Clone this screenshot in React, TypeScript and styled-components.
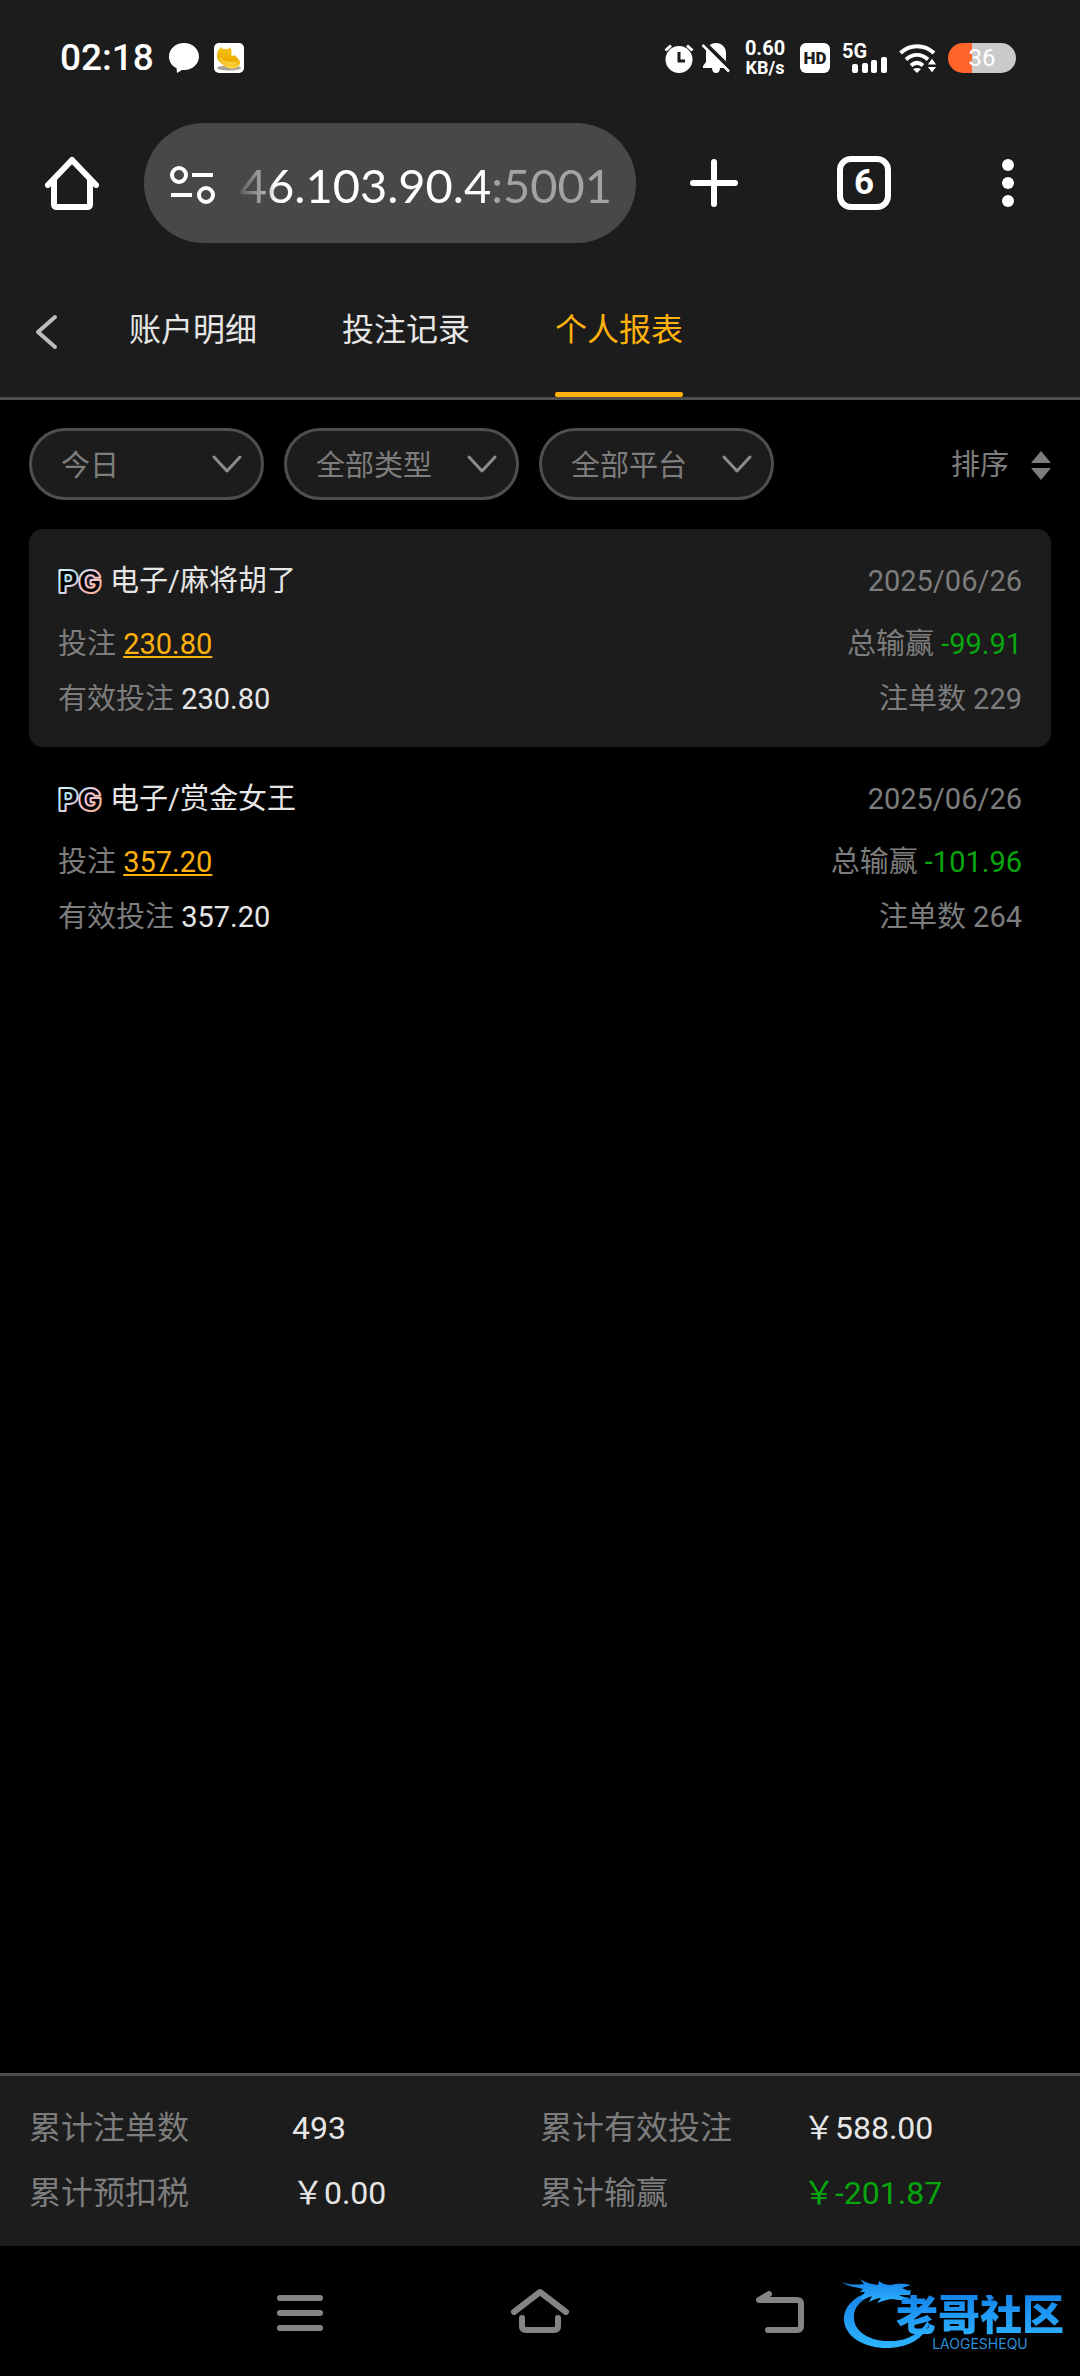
import React from "react";
import styled, { createGlobalStyle, css } from "styled-components";

const GlobalStyle = createGlobalStyle`
  *, *::before, *::after { box-sizing: border-box; }
  body {
    margin: 0;
    background: #000;
    font-family: Roboto, "Noto Sans CJK SC", sans-serif;
    font-size: 29px;
    line-height: 44px;
    color: #e6e6e6;
  }
  button, select {
    margin: 0;
    padding: 0;
    border: 0;
    background: none;
    font: inherit;
    color: inherit;
    cursor: pointer;
  }
  svg { display: block; flex: none; overflow: visible; }
`;

const Page = styled.div`
  min-height: 100vh;
  display: flex;
  flex-direction: column;
`;

const StatusBar = styled.div`
  display: flex;
  justify-content: space-between;
  align-items: center;
  height: 116px;
  padding: 0 64px 0 60px;
  background: #1c1c1c;
  color: #fff;
`;

const StatusGroup = styled.div<{ $gap: number }>`
  display: flex;
  align-items: center;
  gap: ${(p) => p.$gap}px;
`;

const Clock = styled.time`
  font-size: 37px;
  font-weight: 500;
  line-height: 44px;
`;

const NetRate = styled.div`
  width: 46px;
  font-size: 20px;
  font-weight: 700;
  line-height: 20px;
  text-align: center;
`;

const RateUnit = styled.div`
  font-size: 18px;
`;

const Battery = styled.div`
  display: flex;
  align-items: center;
  justify-content: center;
  width: 68px;
  height: 30px;
  border-radius: 15px;
  background: linear-gradient(90deg, #ff6428 36%, #cacaca 36%);
  font-size: 24px;
  line-height: 30px;
`;

const BrowserBar = styled.header`
  display: flex;
  align-items: center;
  padding: 7px 0 24px;
  background: #1c1c1c;
`;

const BarButton = styled.button<{ $width?: number }>`
  display: flex;
  align-items: center;
  justify-content: center;
  width: ${(p) => p.$width ?? 144}px;
  height: 120px;
`;

const AddressPill = styled.button`
  flex: 1;
  min-width: 0;
  display: flex;
  align-items: center;
  gap: 24px;
  height: 120px;
  padding: 4px 24px 0 26px;
  border-radius: 60px;
  background: #484848;
`;

const Address = styled.span`
  flex: 1;
  min-width: 0;
  display: flex;
  justify-content: flex-end;
  overflow: hidden;
  font-family: Lato, sans-serif;
  font-size: 47px;
  line-height: 60px;
  white-space: nowrap;
  color: #fff;
  mask-image: linear-gradient(90deg, rgba(0, 0, 0, 0.1), rgba(0, 0, 0, 0.6) 28px, #000 36px);
`;

const Port = styled.span`
  color: #a3a3a3;
`;

const TabCount = styled.span`
  display: flex;
  align-items: center;
  justify-content: center;
  width: 54px;
  height: 54px;
  border: 6px solid #fff;
  border-radius: 14px;
  font-size: 35px;
  font-weight: 700;
  color: #fff;
`;

const TabBar = styled.nav`
  display: flex;
  align-items: stretch;
  height: 133px;
  border-bottom: 3px solid #4f4f4f;
  background: #1c1c1c;
`;

const BackButton = styled.button`
  display: flex;
  align-items: center;
  width: 129px;
  padding-left: 34px;
`;

const Tabs = styled.div`
  display: flex;
  gap: 85px;
`;

const Tab = styled.button<{ $active?: boolean }>`
  position: relative;
  padding-bottom: 5px;
  font-size: 32px;
  white-space: nowrap;
  color: #e6e6e6;
  ${(p) =>
    p.$active &&
    css`
      color: #ffb10d;
      &::after {
        content: "";
        position: absolute;
        left: 0;
        right: 0;
        bottom: 0;
        height: 5px;
        border-radius: 2px;
        background: #ffb10d;
      }
    `}
`;

const Filters = styled.div`
  display: flex;
  align-items: center;
  gap: 20px;
  padding: 28px 29px 29px;
`;

const SelectBox = styled.label`
  display: grid;
  align-items: center;
  width: 235px;
  > * { grid-area: 1 / 1; }
  > svg {
    justify-self: end;
    margin-right: 22px;
    pointer-events: none;
  }
`;

const Select = styled.select`
  appearance: none;
  width: 100%;
  height: 72px;
  padding: 3px 60px 0 29px;
  border: 3px solid #4f4f4f;
  border-radius: 36px;
  background: #1c1c1c;
  color: #7d7d7d;
`;

const SortButton = styled.button`
  display: flex;
  align-items: center;
  gap: 22px;
  margin-left: auto;
  padding-top: 2px;
  color: #7d7d7d;
`;

const Main = styled.main`
  flex: 1;
  padding: 0 29px;
`;

const Record = styled.article<{ $raised: boolean }>`
  padding: 24px 29px 21px;
  border-radius: 14px;
  background: ${(p) => (p.$raised ? "#1c1c1c" : "transparent")};
`;

const Line = styled.div<{ $head?: boolean }>`
  display: flex;
  justify-content: space-between;
  align-items: center;
  height: 55px;
  margin-bottom: ${(p) => (p.$head ? 8 : 0)}px;
  color: #7d7d7d;
`;

const Title = styled.h2`
  display: flex;
  align-items: center;
  gap: 4px;
  margin: 0;
  font-size: 29px;
  font-weight: 400;
  color: #e6e6e6;
`;

const Value = styled.span<{ $gain?: boolean }>`
  color: ${(p) => (p.$gain ? "#08a60e" : "#e6e6e6")};
`;

const BetLink = styled.a`
  color: #ffb10d;
  text-decoration: underline;
  text-decoration-thickness: 2px;
  text-underline-offset: 2px;
`;

const Totals = styled.dl`
  display: grid;
  grid-template-columns: 53fr 50fr 53fr 50fr;
  grid-auto-rows: 65px;
  align-items: center;
  margin: 0;
  padding: 19px 29px 21px;
  border-top: 3px solid #4f4f4f;
  background: #1c1c1c;
  font-size: 32px;
`;

const TotalLabel = styled.dt`
  color: #7d7d7d;
`;

const TotalValue = styled.dd<{ $gain?: boolean }>`
  margin: 0;
  color: ${(p) => (p.$gain ? "#08a60e" : "#e6e6e6")};
`;

const SystemNav = styled.footer`
  position: relative;
  display: flex;
  justify-content: center;
  height: 130px;
  background: #000;
`;

const NavButton = styled.button`
  display: flex;
  align-items: center;
  justify-content: center;
  width: 240px;
  padding-top: 4px;
`;

const Watermark = styled.div`
  position: absolute;
  right: 16px;
  top: 32px;
  display: grid;
  width: 222px;
  height: 76px;
  pointer-events: none;
  > * { grid-area: 1 / 1; }
`;

const WatermarkText = styled.div`
  justify-self: end;
  display: flex;
  flex-direction: column;
  align-items: center;
  padding-top: 17px;
`;

const WatermarkName = styled.span`
  font-size: 42px;
  font-weight: 900;
  line-height: 42px;
  color: transparent;
  background: linear-gradient(#1484ea, #2cb0ff);
  background-clip: text;
`;

const WatermarkLatin = styled.span`
  font-family: Inter, sans-serif;
  font-size: 14px;
  line-height: 14px;
  color: #2a8fd8;
`;

function AlarmIcon() {
  return (
    <svg width="30" height="30" viewBox="0 0 30 30" aria-hidden="true">
      <circle cx="15" cy="16.500" r="13.500" fill="#fff" />
      <path d="M1.500 7.500 7 2.500M28.500 7.500 23 2.500" stroke="#fff" strokeWidth="3" />
      <path d="M15 9v9h6" fill="none" stroke="#1c1c1c" strokeWidth="3" />
    </svg>
  );
}

function MutedBellIcon() {
  return (
    <svg width="28" height="30" viewBox="0 0 28 30" aria-hidden="true">
      <path
        d="M14 0c6 0 10 4.500 10 10v8l3 5v2h-9c0 3-1.500 5-4 5s-4-2-4-5H1v-2l3-4v-9C4 4.500 8 0 14 0Z"
        fill="#fff"
      />
      <path d="M3 .5 29 26" stroke="#1c1c1c" strokeWidth="4" />
      <path d="M.5 2 27 28.500" stroke="#fff" strokeWidth="2.500" />
    </svg>
  );
}

function HdIcon() {
  return (
    <svg width="30" height="30" viewBox="0 0 30 30" role="img" aria-label="HD">
      <rect width="30" height="30" rx="6" fill="#fff" />
      <text x="15" y="21" textAnchor="middle" fontFamily="Roboto" fontSize="17" fontWeight="900" fill="#1c1c1c">
        HD
      </text>
    </svg>
  );
}

function SignalIcon() {
  return (
    <svg width="45" height="32" viewBox="0 0 45 32" role="img" aria-label="5G">
      <text x="0" y="16" fontFamily="Roboto" fontSize="20" fontWeight="700" fill="#fff">
        5G
      </text>
      <g fill="#fff">
        <rect x="10" y="22" width="6" height="9" rx="2" />
        <rect x="20" y="21" width="6" height="10" rx="2" />
        <rect x="29" y="18" width="6" height="13" rx="2" />
        <rect x="39" y="15" width="6" height="16" rx="2" />
      </g>
    </svg>
  );
}

function WifiIcon() {
  return (
    <svg width="37" height="30" viewBox="0 0 37 30" aria-hidden="true">
      <g fill="none" stroke="#fff" strokeWidth="4">
        <path d="M1.500 10C11 1 25 1 35 10" />
        <path d="M7 16.500c7-6 15-6 22 0" />
        <path d="M12 22.500c4-3.500 8-3.500 12 0" />
      </g>
      <path d="M14 26c2.500-1.500 5.500-1.500 8 0L18 30Z" fill="#fff" />
      <path d="M28 22 33 15l5 7ZM28 23.500h10L33 30Z" fill="#fff" stroke="#1c1c1c" />
    </svg>
  );
}

function BubbleIcon() {
  return (
    <svg width="30" height="30" viewBox="0 0 30 30" aria-hidden="true">
      <path d="M15 0c8.500 0 15 6 15 13.500S23.500 27 15 27l-2 0-5 3-.5-5C3 23 0 19 0 13.500 0 6 6.500 0 15 0Z" fill="#fff" />
    </svg>
  );
}

function GoldAppIcon() {
  return (
    <svg width="30" height="30" viewBox="0 0 30 30" aria-hidden="true">
      <defs>
        <linearGradient id="gold" x1="0" y1="0" x2="0" y2="1">
          <stop offset="0" stopColor="#f5c51c" />
          <stop offset="0.6" stopColor="#f0ac00" />
          <stop offset="1" stopColor="#ffd94a" />
        </linearGradient>
      </defs>
      <rect width="30" height="30" rx="5" fill="#fff" />
      <ellipse cx="15" cy="25" rx="12" ry="2.500" fill="#a8a396" />
      <path
        d="M3 13C3 8 5 6 7 4l2 2h5l2-2c2 3 2 6 1 8l2 1 2-1c1 2 3 3 4 5 2 3 1 6-2 7.500-4 2-11 1-15-3.500C5 18 3 17 3 13Z"
        fill="url(#gold)"
      />
      <path d="M6 15c3 5 9 6 16 5" fill="none" stroke="#f9cf3a" strokeWidth="2" />
    </svg>
  );
}

function HomeIcon() {
  return (
    <svg width="54" height="54" viewBox="0 0 54 54" fill="none" stroke="#fff" strokeWidth="6" aria-hidden="true">
      <path d="M3 29 27 4l24 25" strokeLinecap="round" strokeLinejoin="round" />
      <path d="M9 24v24q0 3 3 3h30q3 0 3-3V24" />
    </svg>
  );
}

function SiteInfoIcon() {
  return (
    <svg width="45" height="39" viewBox="0 0 45 39" fill="none" stroke="#fff" strokeWidth="4" aria-hidden="true">
      <circle cx="9" cy="9" r="7" />
      <path d="M22 9h21M1 29h21" />
      <circle cx="36" cy="29" r="7" />
    </svg>
  );
}

function PlusIcon() {
  return (
    <svg width="48" height="48" viewBox="0 0 48 48" stroke="#fff" strokeWidth="6" strokeLinecap="round" aria-hidden="true">
      <path d="M24 3v42M3 24h42" />
    </svg>
  );
}

function MoreIcon() {
  return (
    <svg width="12" height="48" viewBox="0 0 12 48" fill="#fff" aria-hidden="true">
      <circle cx="6" cy="6" r="6" />
      <circle cx="6" cy="24" r="6" />
      <circle cx="6" cy="42" r="6" />
    </svg>
  );
}

function BackIcon() {
  return (
    <svg width="24" height="36" viewBox="0 0 24 36" fill="none" stroke="#bdbdbd" strokeWidth="4" strokeLinecap="round" aria-hidden="true">
      <path d="M21 3 4 18l17 15" strokeLinejoin="round" />
    </svg>
  );
}

function ChevronIcon() {
  return (
    <svg width="30" height="18" viewBox="0 0 30 18" fill="none" stroke="#8c8c8c" strokeWidth="3" strokeLinecap="round" aria-hidden="true">
      <path d="M2 2l13 14L28 2" strokeLinejoin="round" />
    </svg>
  );
}

function SortIcon() {
  return (
    <svg width="20" height="29" viewBox="0 0 20 29" fill="#7d7d7d" aria-hidden="true">
      <path d="M0 12 10 0l10 12ZM0 17h20L10 29Z" />
    </svg>
  );
}

function PgLogo() {
  return (
    <svg width="48" height="28" viewBox="0 0 48 28" role="img" aria-label="PG">
      <defs>
        <linearGradient id="pg" x1="0" y1="0" x2="1" y2="1">
          <stop offset="0" stopColor="#ffffff" />
          <stop offset="0.3" stopColor="#a9e4ee" />
          <stop offset="0.55" stopColor="#f3c7dc" />
          <stop offset="0.8" stopColor="#f0b59a" />
          <stop offset="1" stopColor="#dff4f2" />
        </linearGradient>
      </defs>
      <text
        x="0"
        y="26"
        fontFamily="Inter"
        fontSize="31"
        fontWeight="900"
        fill="#000"
        stroke="url(#pg)"
        strokeWidth="2"
        strokeLinejoin="bevel"
      >
        PG
      </text>
    </svg>
  );
}

function RecentsIcon() {
  return (
    <svg width="46" height="36" viewBox="0 0 46 36" stroke="#848484" strokeWidth="6" strokeLinecap="round" aria-hidden="true">
      <path d="M3 3h40M3 18h40M3 33h40" />
    </svg>
  );
}

function NavHomeIcon() {
  return (
    <svg width="58" height="46" viewBox="0 0 58 46" fill="none" stroke="#848484" strokeWidth="6" strokeLinecap="round" strokeLinejoin="round" aria-hidden="true">
      <path d="M3 22 29 2l26 20" />
      <path d="M11 28v8q0 4 4 4h28q4 0 4-4v-8" />
    </svg>
  );
}

function NavBackIcon() {
  return (
    <svg width="48" height="46" viewBox="0 0 48 46" fill="none" stroke="#848484" strokeWidth="6" strokeLinecap="round" strokeLinejoin="round" aria-hidden="true">
      <path d="M13 4 3 10h38q4 0 4 4v22q0 4-4 4H12" />
    </svg>
  );
}

function DragonIcon() {
  return (
    <svg width="96" height="76" viewBox="0 0 96 76" aria-hidden="true">
      <defs>
        <linearGradient id="dragon" x1="0" y1="0" x2="0" y2="1">
          <stop offset="0" stopColor="#147fe8" />
          <stop offset="1" stopColor="#2db4ff" />
        </linearGradient>
      </defs>
      <g fill="url(#dragon)">
        <path d="M34 12C12 17 1 29 2 43c2 17 22 28 46 27 18-1 33-9 39-23l-1-5C80 54 66 63 50 63 30 64 13 55 12 41 11 28 21 19 37 16Z" />
        <path d="M0 4c7 3 14 3 22 2l-4-5c6 4 12 5 18 6l1-4c4 3 8 4 12 4 7-2 14-1 20 0l-9 3c4 2 6 3 9 2l-1 5-11 0c4 2 7 3 10 2l-3 3c-6 1-10-1-15-1-5 1-9 2-14 4l4-5c-4 0-8 2-12 4l3-6c-4 1-8 3-12 3l5-7-5 0 3-3C15 9 6 9 0 4Z" />
      </g>
    </svg>
  );
}

const tabs = ["账户明细", "投注记录", "个人报表"];

const filters = [
  { label: "日期", value: "今日" },
  { label: "类型", value: "全部类型" },
  { label: "平台", value: "全部平台" },
];

const records = [
  { game: "电子/麻将胡了", date: "2025/06/26", bet: "230.80", valid: "230.80", net: "-99.91", count: 229 },
  { game: "电子/赏金女王", date: "2025/06/26", bet: "357.20", valid: "357.20", net: "-101.96", count: 264 },
];

const totals = [
  { label: "累计注单数", value: "493" },
  { label: "累计有效投注", value: "￥588.00" },
  { label: "累计预扣税", value: "￥0.00" },
  { label: "累计输赢", value: "￥-201.87", gain: true },
];

export default function App() {
  return (
    <>
      <GlobalStyle />
      <Page>
        <StatusBar>
          <StatusGroup $gap={15}>
            <Clock>02:18</Clock>
            <BubbleIcon />
            <GoldAppIcon />
          </StatusGroup>
          <StatusGroup $gap={12}>
            <StatusGroup $gap={8}>
              <AlarmIcon />
              <MutedBellIcon />
            </StatusGroup>
            <NetRate>
              0.60
              <RateUnit>KB/s</RateUnit>
            </NetRate>
            <HdIcon />
            <SignalIcon />
            <WifiIcon />
            <Battery>36</Battery>
          </StatusGroup>
        </StatusBar>

        <BrowserBar>
          <BarButton aria-label="主页">
            <HomeIcon />
          </BarButton>
          <AddressPill>
            <SiteInfoIcon />
            <Address>
              46.103.90.4<Port>:5001</Port>
            </Address>
          </AddressPill>
          <BarButton $width={156} aria-label="新标签页">
            <PlusIcon />
          </BarButton>
          <BarButton>
            <TabCount>6</TabCount>
          </BarButton>
          <BarButton aria-label="更多">
            <MoreIcon />
          </BarButton>
        </BrowserBar>

        <TabBar>
          <BackButton aria-label="返回">
            <BackIcon />
          </BackButton>
          <Tabs>
            {tabs.map((name) => (
              <Tab key={name} $active={name === "个人报表"}>
                {name}
              </Tab>
            ))}
          </Tabs>
        </TabBar>

        <Filters>
          {filters.map((f) => (
            <SelectBox key={f.label}>
              <Select aria-label={f.label} defaultValue={f.value}>
                <option>{f.value}</option>
              </Select>
              <ChevronIcon />
            </SelectBox>
          ))}
          <SortButton>
            排序
            <SortIcon />
          </SortButton>
        </Filters>

        <Main>
          {records.map((r, i) => (
            <Record key={r.game} $raised={i % 2 === 0}>
              <Line $head>
                <Title>
                  <PgLogo />
                  {r.game}
                </Title>
                <time>{r.date}</time>
              </Line>
              <Line>
                <span>
                  投注 <BetLink href="#bets">{r.bet}</BetLink>
                </span>
                <span>
                  总输赢 <Value $gain>{r.net}</Value>
                </span>
              </Line>
              <Line>
                <span>
                  有效投注 <Value>{r.valid}</Value>
                </span>
                <span>注单数 {r.count}</span>
              </Line>
            </Record>
          ))}
        </Main>

        <Totals>
          {totals.map((t) => (
            <React.Fragment key={t.label}>
              <TotalLabel>{t.label}</TotalLabel>
              <TotalValue $gain={t.gain}>{t.value}</TotalValue>
            </React.Fragment>
          ))}
        </Totals>

        <SystemNav>
          <NavButton aria-label="最近任务">
            <RecentsIcon />
          </NavButton>
          <NavButton aria-label="桌面">
            <NavHomeIcon />
          </NavButton>
          <NavButton aria-label="后退">
            <NavBackIcon />
          </NavButton>
          <Watermark>
            <DragonIcon />
            <WatermarkText>
              <WatermarkName>老哥社区</WatermarkName>
              <WatermarkLatin>LAOGESHEQU</WatermarkLatin>
            </WatermarkText>
          </Watermark>
        </SystemNav>
      </Page>
    </>
  );
}
